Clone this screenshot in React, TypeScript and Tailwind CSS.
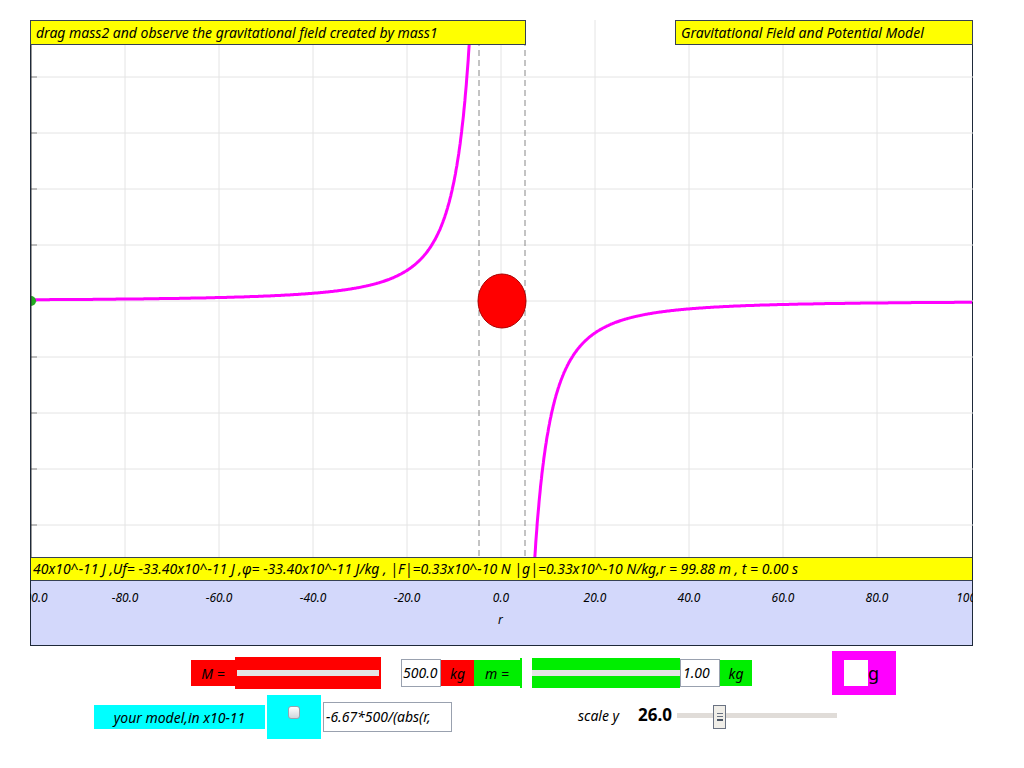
export default function App() {
  const W = 942, H = 537; // plot area from x=30,y=20
  const cx = 471, cy = 281, s = 4.7, C = 12500;
  const pts = (a: number, b: number, sign: number) => {
    const p: string[] = [];
    for (let r = a; sign < 0 ? r <= b : r <= b; r += 0.1) {
      const y = cy - sign * (C / (r * r * s * s)) * s * s / 1;
      p.push(`${(cx + r * s).toFixed(1)},${Math.max(-50, Math.min(600, y)).toFixed(1)}`);
    }
    return p.join(" ");
  };
  const f = "font-['Liberation_Sans',Arial,sans-serif] italic";
  return (
    <div className={`w-[1024px] h-[768px] bg-white relative ${f} text-[14px] text-black`}>
      <div className="absolute left-[30px] top-[20px] w-[943px] h-[626px] border border-gray-800 border-t-0">
        <svg width={W} height={H} className="block">
          {[94, 188, 282, 376, 470, 564, 658, 752, 846].map((x) => (
            <line key={x} x1={x} y1={0} x2={x} y2={H} stroke="#e4e4e4" />
          ))}
          {[57, 113, 169, 225, 281, 337, 393, 449, 505].map((y) => (
            <g key={y}>
              <line x1={0} y1={y} x2={W} y2={y} stroke="#e4e4e4" />
              <line x1={0} y1={y} x2={6} y2={y} stroke="#888" />
            </g>
          ))}
          <line x1={448} y1={0} x2={448} y2={H} stroke="#888" strokeDasharray="6 4" />
          <line x1={494} y1={0} x2={494} y2={H} stroke="#888" strokeDasharray="6 4" />
          <polyline points={pts(-100, -5.2, 1)} fill="none" stroke="#ff00ff" strokeWidth={3} />
          <polyline points={pts(5.3, 100, -1)} fill="none" stroke="#ff00ff" strokeWidth={3} />
          <ellipse cx={471} cy={281} rx={24} ry={27} fill="#ff0000" stroke="#aa0000" />
          <circle cx={0} cy={281} r={5} fill="#22aa22" />
          <line x1={0} y1={0} x2={0} y2={H} stroke="#333" />
        </svg>
        <div className="h-[24px] bg-[#ffff00] border-y border-gray-700 overflow-hidden whitespace-nowrap leading-[22px] px-[2px]">
          40x10^-11 J ,Uf= -33.40x10^-11 J ,φ= -33.40x10^-11 J/kg , |F|=0.33x10^-10 N |g|=0.33x10^-10 N/kg,r = 99.88 m , t = 0.00 s
        </div>
        <div className="relative h-[64px] bg-[#d3d8fb] text-[12px]">
          {[-100, -80, -60, -40, -20, 0, 20, 40, 60, 80, 100].map((v, i) => (
            <span key={v} className="absolute top-[8px] -translate-x-1/2" style={{ left: i * 94 }}>
              {v.toFixed(1)}
            </span>
          ))}
          <div className="absolute left-0 right-0 top-0 h-[3px] overflow-hidden" />
          <span className="absolute left-[467px] top-[30px]">r</span>
        </div>
      </div>
      {/* cover outside left/right for clipped labels */}
      <div className="absolute left-0 top-[580px] w-[30px] h-[30px] bg-white" />
      <div className="absolute left-[973px] top-[580px] w-[51px] h-[30px] bg-white" />
      <div className="absolute left-[30px] top-[20px] w-[496px] h-[25px] bg-[#ffff00] border border-gray-700 px-[5px] leading-[23px]">
        drag mass2 and observe the gravitational field created by mass1
      </div>
      <div className="absolute left-[525px] top-[0px] w-[150px] h-[20px] bg-white" />
      <div className="absolute left-[675px] top-[20px] w-[298px] h-[25px] bg-[#ffff00] border border-gray-700 px-[5px] leading-[23px]">
        Gravitational Field and Potential Model
      </div>
      <div className="absolute left-[191px] top-[657px] flex items-center">
        <div className="w-[44px] h-[26px] bg-[#ff0000] flex items-center justify-center">M =</div>
        <div className="w-[146px] h-[32px] bg-[#ff0000] flex items-center px-[2px]"><div className="w-full h-[6px] bg-[#e5e5e5]" /></div>
        <div className="w-[20px]" />
        <div className="w-[40px] h-[28px] border border-gray-400 bg-white overflow-hidden leading-[26px] px-[1px]">500.0</div>
        <div className="w-[33px] h-[26px] bg-[#ff0000] flex items-center justify-center">kg</div>
        <div className="w-[46px] h-[26px] bg-[#00ee00] flex items-center justify-center">m =</div>
        <div className="w-[2px] h-[30px] bg-[#00ee00]" />
        <div className="w-[10px]" />
        <div className="w-[148px] h-[30px] bg-[#00ee00] flex items-center"><div className="w-full h-[6px] bg-[#e5e5e5]" /></div>
        <div className="w-[40px] h-[28px] border border-gray-400 bg-white leading-[26px] px-[2px]">1.00</div>
        <div className="w-[32px] h-[26px] bg-[#00ee00] flex items-center justify-center">kg</div>
      </div>
      <div className="absolute left-[832px] top-[651px] w-[64px] h-[44px] bg-[#ff00ff] flex items-center pl-[12px]">
        <div className="w-[24px] h-[26px] bg-white" />
        <span className="not-italic font-['Liberation_Serif',serif] text-[18px] leading-none">g</span>
      </div>
      <div className="absolute left-[94px] top-[705px] w-[171px] h-[24px] bg-[#00ffff] flex items-center justify-center">your model,in x10-11</div>
      <div className="absolute left-[267px] top-[695px] w-[54px] h-[44px] bg-[#00ffff] flex justify-center pt-[11px]">
        <div className="w-[12px] h-[13px] rounded-[3px] border border-gray-400 bg-gradient-to-b from-white to-gray-300" />
      </div>
      <div className="absolute left-[323px] top-[702px] w-[129px] h-[30px] border border-gray-400 bg-white overflow-hidden whitespace-nowrap leading-[28px] px-[2px]">-6.67*500/(abs(r,</div>
      <div className="absolute left-[578px] top-[705px]">scale y</div>
      <div className="absolute left-[638px] top-[702px] not-italic font-bold font-['Liberation_Serif',serif] text-[17px]">26.0</div>
      <div className="absolute left-[677px] top-[713px] w-[160px] h-[5px] bg-[#e0dcd8]" />
      <div className="absolute left-[713px] top-[705px] w-[13px] h-[24px] border border-gray-500 bg-[#f0eee8] flex flex-col items-center justify-center gap-[2px]">
        <div className="w-[6px] h-[1px] bg-gray-500" /><div className="w-[6px] h-[1px] bg-gray-500" /><div className="w-[6px] h-[2px] bg-gray-600" />
      </div>
    </div>
  );
}
